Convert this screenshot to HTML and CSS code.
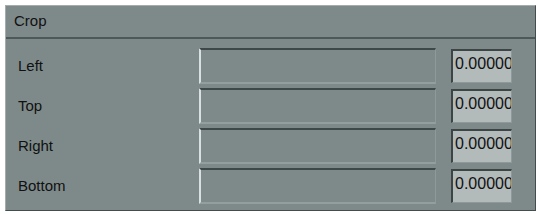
FILE: index.html
```html
<!doctype html>
<html>
	<head>
		<meta charset="utf-8"/>
		<title>Crop</title>
		<link rel="stylesheet" href="styles.css">
	</head>
	<body>
		<div class="panel">
			<div class="head">Crop</div>
			<div class="rows">
				<div class="row">
					<span class="label">Left</span>
					<div class="slider"></div>
					<div class="num">0.000000</div>
				</div>
				<div class="row">
					<span class="label">Top</span>
					<div class="slider"></div>
					<div class="num">0.000000</div>
				</div>
				<div class="row">
					<span class="label">Right</span>
					<div class="slider"></div>
					<div class="num">0.000000</div>
				</div>
				<div class="row">
					<span class="label">Bottom</span>
					<div class="slider"></div>
					<div class="num">0.000000</div>
				</div>
			</div>
		</div>
	</body>
</html>
```
FILE: styles.css
```css
html,body{margin:0;padding:0;background:#fff;}
body{font-family:"Liberation Sans",Arial,sans-serif;font-size:15px;color:#111;}
.panel{margin:5px 0 0 5px;width:529px;height:204px;background:#7e8a8a;border-left:1px solid #a3adad;border-top:1px solid #a3adad;border-right:1px solid #444d4d;border-bottom:1px solid #444d4d;}
.head{height:31px;line-height:30px;padding-left:8px;border-bottom:2px solid #4e5858;}
.rows{padding:9px 0 0 12px;}
.row{display:flex;align-items:center;height:35px;margin-bottom:5px;}
.label{width:181px;}
.slider{width:234px;height:32px;border-top:2px solid #3f4848;border-left:2px solid #d8e0e0;border-right:1px solid #8e9a9a;border-bottom:2px solid #939e9e;background:#7e8a8a;}
.num{margin-left:15px;width:61px;height:34px;overflow:hidden;white-space:nowrap;background:#b2baba;border-top:2px solid #3c4444;border-left:2px solid #3c4444;border-right:1px solid #8e9a9a;border-bottom:1px solid #8e9a9a;font-size:16px;line-height:26px;padding-left:2px;box-sizing:border-box;}
```
